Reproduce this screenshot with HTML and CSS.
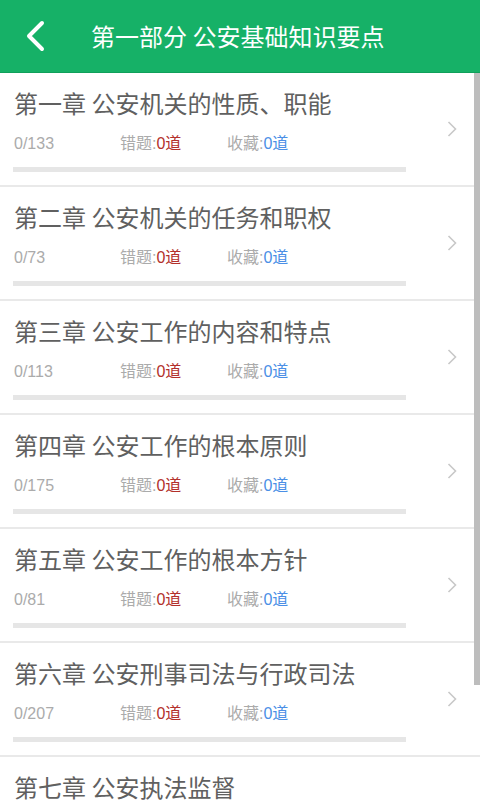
FILE: index.html
```html
<!DOCTYPE html>
<html lang="zh-CN">
<head>
<meta charset="utf-8">
<title>第一部分 公安基础知识要点</title>
<link rel="stylesheet" href="styles.css">
</head>
<body>
<div class="app">
  <header class="topbar">
    <svg class="back" width="22" height="32" viewBox="0 0 22 32"><path d="M17 3 L4 16 L17 29" fill="none" stroke="#fff" stroke-width="4" stroke-linecap="round" stroke-linejoin="round"/></svg>
    <h1 class="title">第一部分 公安基础知识要点</h1>
  </header>
  <main class="list">
    <div class="row">
      <div class="info">
        <div class="name">第一章 公安机关的性质、职能</div>
        <div class="stats"><span class="count">0/133</span><span class="stat">错题:<em class="wrong">0道</em></span><span class="stat">收藏:<em class="fav">0道</em></span></div>
        <div class="bar"></div>
      </div>
      <svg class="chev" width="10" height="16" viewBox="0 0 10 16"><path d="M1.5 1 L8.5 8 L1.5 15" fill="none" stroke="#c8c8c8" stroke-width="1.6"/></svg>
    </div>
    <div class="row">
      <div class="info">
        <div class="name">第二章 公安机关的任务和职权</div>
        <div class="stats"><span class="count">0/73</span><span class="stat">错题:<em class="wrong">0道</em></span><span class="stat">收藏:<em class="fav">0道</em></span></div>
        <div class="bar"></div>
      </div>
      <svg class="chev" width="10" height="16" viewBox="0 0 10 16"><path d="M1.5 1 L8.5 8 L1.5 15" fill="none" stroke="#c8c8c8" stroke-width="1.6"/></svg>
    </div>
    <div class="row">
      <div class="info">
        <div class="name">第三章 公安工作的内容和特点</div>
        <div class="stats"><span class="count">0/113</span><span class="stat">错题:<em class="wrong">0道</em></span><span class="stat">收藏:<em class="fav">0道</em></span></div>
        <div class="bar"></div>
      </div>
      <svg class="chev" width="10" height="16" viewBox="0 0 10 16"><path d="M1.5 1 L8.5 8 L1.5 15" fill="none" stroke="#c8c8c8" stroke-width="1.6"/></svg>
    </div>
    <div class="row">
      <div class="info">
        <div class="name">第四章 公安工作的根本原则</div>
        <div class="stats"><span class="count">0/175</span><span class="stat">错题:<em class="wrong">0道</em></span><span class="stat">收藏:<em class="fav">0道</em></span></div>
        <div class="bar"></div>
      </div>
      <svg class="chev" width="10" height="16" viewBox="0 0 10 16"><path d="M1.5 1 L8.5 8 L1.5 15" fill="none" stroke="#c8c8c8" stroke-width="1.6"/></svg>
    </div>
    <div class="row">
      <div class="info">
        <div class="name">第五章 公安工作的根本方针</div>
        <div class="stats"><span class="count">0/81</span><span class="stat">错题:<em class="wrong">0道</em></span><span class="stat">收藏:<em class="fav">0道</em></span></div>
        <div class="bar"></div>
      </div>
      <svg class="chev" width="10" height="16" viewBox="0 0 10 16"><path d="M1.5 1 L8.5 8 L1.5 15" fill="none" stroke="#c8c8c8" stroke-width="1.6"/></svg>
    </div>
    <div class="row">
      <div class="info">
        <div class="name">第六章 公安刑事司法与行政司法</div>
        <div class="stats"><span class="count">0/207</span><span class="stat">错题:<em class="wrong">0道</em></span><span class="stat">收藏:<em class="fav">0道</em></span></div>
        <div class="bar"></div>
      </div>
      <svg class="chev" width="10" height="16" viewBox="0 0 10 16"><path d="M1.5 1 L8.5 8 L1.5 15" fill="none" stroke="#c8c8c8" stroke-width="1.6"/></svg>
    </div>
    <div class="row row-last">
      <div class="info">
        <div class="name">第七章 公安执法监督</div>
      </div>
    </div>
    <div class="scrollthumb"></div>
  </main>
</div>
</body>
</html>
```
FILE: styles.css
```css
html, body {
  margin: 0;
  padding: 0;
  background: #fff;
}
body {
  font-family: "Noto Sans CJK SC", "Noto Sans", sans-serif;
  width: 480px;
  height: 800px;
  overflow: hidden;
}
.app {
  display: flex;
  flex-direction: column;
  height: 800px;
}
.topbar {
  height: 72px;
  flex: none;
  background: #16b167;
  border-bottom: 1px solid #10a05b;
  display: flex;
  align-items: center;
  padding-left: 25px;
  box-sizing: content-box;
}
.back {
  flex: none;
  display: block;
}
.title {
  margin: 0 0 0 44px;
  font-size: 24px;
  font-weight: normal;
  color: #fff;
  line-height: 32px;
  white-space: nowrap;
}
.list {
  position: relative;
  flex: 1;
  overflow: hidden;
}
.row {
  display: flex;
  align-items: center;
  height: 114px;
  box-sizing: border-box;
  border-bottom: 2px solid #e9e9e9;
}
.row-last {
  border-bottom: none;
}
.info {
  width: 393px;
  margin-left: 13px;
  padding-top: 14px;
  padding-bottom: 14px;
  align-self: flex-start;
}
.name {
  font-size: 24px;
  line-height: 32px;
  color: #606060;
  padding-left: 1px;
  white-space: nowrap;
}
.stats {
  display: flex;
  margin-top: 13px;
  font-family: "Liberation Sans", "Noto Sans CJK SC", sans-serif;
  font-size: 16px;
  line-height: 24px;
  color: #ababab;
  padding-left: 1px;
}
.count {
  width: 106px;
}
.stat {
  width: 107px;
}
.stat em {
  font-style: normal;
}
.wrong {
  color: #b3302b;
}
.fav {
  color: #4b8fe6;
}
.bar {
  height: 5px;
  margin-top: 11px;
  background: #e6e6e6;
}
.chev {
  flex: none;
  display: block;
  margin-left: 41px;
}
.scrollthumb {
  position: absolute;
  right: 0;
  top: 0;
  width: 6px;
  height: 612px;
  background: #bdbdbd;
}
```
